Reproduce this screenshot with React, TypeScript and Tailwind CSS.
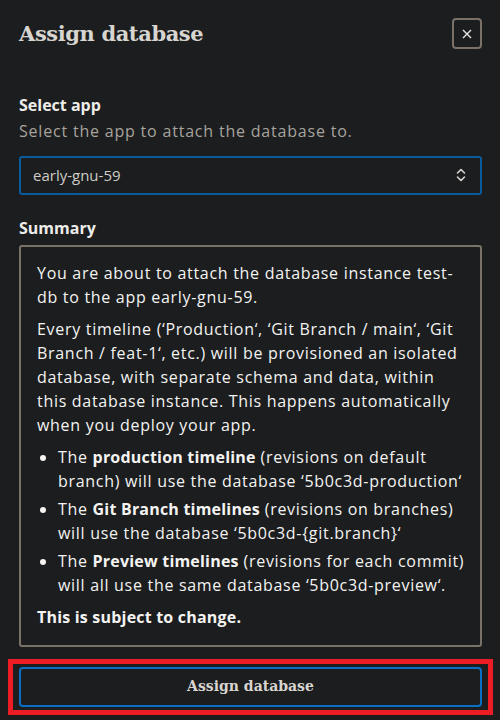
import React from "react";

export default function App() {
  const body = { fontFamily: '"Open Sans", "Noto Sans", sans-serif' };
  const serif = { fontFamily: '"DejaVu Serif", "Liberation Serif", serif' };
  return (
    <div className="w-[500px] h-[720px] bg-[#1b1d1f] text-[#e8e6e3] overflow-hidden" style={body}>
      <div className="flex items-center justify-between pl-[19px] pr-[18px] pt-[18px]">
        <h1 className="text-[21px] font-bold text-[#d8d5d0] tracking-[-0.4px]" style={serif}>
          Assign database
        </h1>
        <button className="w-[30px] h-[31px] border-2 border-[#7a7168] rounded-[4px] flex items-center justify-center text-[#e8e6e3]">
          <svg width="12" height="12" viewBox="0 0 12 12" fill="none" stroke="currentColor" strokeWidth="1.4">
            <path d="M2 2 L10 10 M10 2 L2 10" />
          </svg>
        </button>
      </div>

      <div className="px-[19px] pr-[18px]">
        <div className="mt-[43px] text-[16px] font-bold leading-[24px] text-[#eeece9]">Select app</div>
        <div className="mt-[3px] text-[16px] leading-[22px] text-[#a8a39c] tracking-[0.8px]">
          Select the app to attach the database to.
        </div>
        <div className="mt-[14px] h-[39px] border-2 border-[#0a5a9c] rounded-[3px] flex items-center justify-between pl-[12px] pr-[14px]">
          <span className="text-[15px] text-[#cfcbc6]">early-gnu-59</span>
          <svg width="10" height="14" viewBox="0 0 10 14" fill="none" stroke="#d8d5d0" strokeWidth="1.6" strokeLinecap="round" strokeLinejoin="round">
            <path d="M1.5 5 L5 1.5 L8.5 5 M1.5 9 L5 12.5 L8.5 9" />
          </svg>
        </div>

        <div className="mt-[21px] text-[16px] font-bold leading-[24px] text-[#eeece9]">Summary</div>
        <div className="mt-[5px] border-2 border-[#7a7168] rounded-[3px] pt-[14px] pb-[16px] pl-[16px] pr-[4px] text-[16px] leading-[24px] text-[#f4f3f1] tracking-[0.7px] whitespace-nowrap">
          <p>
            You are about to attach the database instance test-
            <br />
            db to the app early-gnu-59.
          </p>
          <p className="mt-[8px]">
            Every timeline (‘Production‘, ‘Git Branch / main‘, ‘Git
            <br />
            Branch / feat-1‘, etc.) will be provisioned an isolated
            <br />
            database, with separate schema and data, within
            <br />
            this database instance. This happens automatically
            <br />
            when you deploy your app.
          </p>
          <ul className="mt-[8px] list-disc pl-[21px]">
            <li>
              The <b className="tracking-[0.2px]">production timeline</b> (revisions on default
              <br />
              branch) will use the database ‘5b0c3d-production‘
            </li>
            <li className="mt-[4px]">
              The <b className="tracking-[0.2px]">Git Branch timelines</b> (revisions on branches)
              <br />
              will use the database ‘5b0c3d-{"{git.branch}"}‘
            </li>
            <li className="mt-[4px]">
              The <b className="tracking-[0.2px]">Preview timelines</b> (revisions for each commit)
              <br />
              will all use the same database ‘5b0c3d-preview‘.
            </li>
          </ul>
          <p className="mt-[8px] font-bold tracking-[0.2px]">This is subject to change.</p>
        </div>
      </div>

      <div className="mt-[12px] mx-[8px] border-[5px] border-[#ec1c24] px-[6px] py-[3px] w-[485px]">
        <button className="w-full h-[40px] border-2 border-[#0a6fc2] rounded-[4px] flex items-center justify-center">
          <span className="text-[14px] font-bold text-[#d8d5d0]" style={serif}>Assign database</span>
        </button>
      </div>
    </div>
  );
}
